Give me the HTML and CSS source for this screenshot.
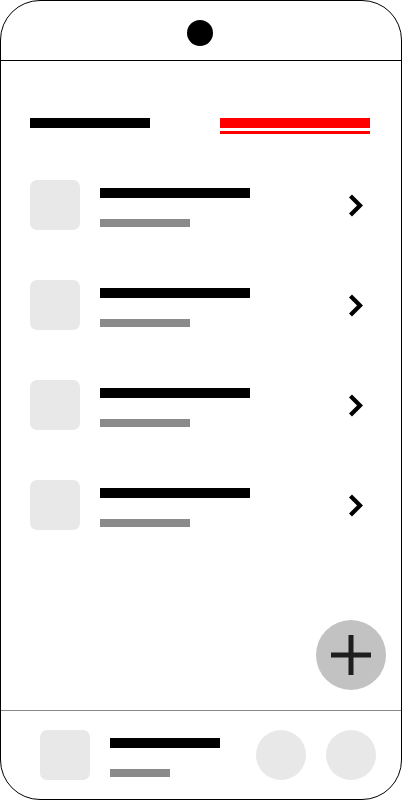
FILE: index.html
```html
<!DOCTYPE html>
<html lang="en">
<head>
<meta charset="utf-8">
<title>Wireframe</title>
<link rel="stylesheet" href="styles.css">
</head>
<body>
<div class="phone">
  <div class="notch"><div class="camera"></div></div>
  <main class="content">
    <div class="header">
      <div class="title-bar"></div>
      <div class="link">
        <div class="link-bar"></div>
        <div class="link-line"></div>
      </div>
    </div>
    <ul class="list">
      <li class="item">
        <div class="thumb"></div>
        <div class="lines"><div class="line-title"></div><div class="line-sub"></div></div>
        <svg class="chevron" viewBox="0 0 22 24" width="22" height="24"><path d="M2.5 3 L12 12.5 L2.5 22" /></svg>
      </li>
      <li class="item">
        <div class="thumb"></div>
        <div class="lines"><div class="line-title"></div><div class="line-sub"></div></div>
        <svg class="chevron" viewBox="0 0 22 24" width="22" height="24"><path d="M2.5 3 L12 12.5 L2.5 22" /></svg>
      </li>
      <li class="item">
        <div class="thumb"></div>
        <div class="lines"><div class="line-title"></div><div class="line-sub"></div></div>
        <svg class="chevron" viewBox="0 0 22 24" width="22" height="24"><path d="M2.5 3 L12 12.5 L2.5 22" /></svg>
      </li>
      <li class="item">
        <div class="thumb"></div>
        <div class="lines"><div class="line-title"></div><div class="line-sub"></div></div>
        <svg class="chevron" viewBox="0 0 22 24" width="22" height="24"><path d="M2.5 3 L12 12.5 L2.5 22" /></svg>
      </li>
    </ul>
    <button class="fab" type="button" aria-label="Add">
      <svg viewBox="0 0 70 70" width="70" height="70"><path d="M15 35 H55 M35 15 V55" /></svg>
    </button>
  </main>
  <footer class="footer">
    <div class="thumb"></div>
    <div class="lines"><div class="footer-title"></div><div class="footer-sub"></div></div>
    <div class="circles">
      <div class="circle"></div>
      <div class="circle"></div>
    </div>
  </footer>
</div>
</body>
</html>
```

FILE: styles.css
```css
* { box-sizing: border-box; }

html, body {
  margin: 0;
  padding: 0;
  background: #fff;
  font-family: "Liberation Sans", Arial, sans-serif;
}

.phone {
  width: 402px;
  height: 800px;
  border: 1px solid #000;
  border-radius: 40px;
  overflow: hidden;
  display: flex;
  flex-direction: column;
  background: #fff;
}

.notch {
  height: 60px;
  flex-shrink: 0;
  border-bottom: 1px solid #000;
  padding: 19px 0 0 186px;
}

.camera {
  width: 26px;
  height: 26px;
  border-radius: 50%;
  background: #000;
}

.content {
  flex: 1;
  display: flex;
  flex-direction: column;
  padding: 57px 0 20px 0;
}

.header {
  display: flex;
  justify-content: space-between;
  align-items: flex-start;
  padding: 0 31px 0 29px;
  margin-bottom: 46px;
}

.title-bar {
  width: 120px;
  height: 10px;
  background: #000;
}

.link {
  width: 150px;
}

.link-bar {
  height: 10px;
  background: #ff0000;
}

.link-line {
  height: 3px;
  margin-top: 3px;
  background: #ff0000;
}

.list {
  list-style: none;
  margin: 0;
  padding: 0 31px 0 29px;
  display: flex;
  flex-direction: column;
  gap: 50px;
}

.item {
  display: flex;
  align-items: flex-start;
  height: 50px;
}

.thumb {
  width: 50px;
  height: 50px;
  flex-shrink: 0;
  border-radius: 7px;
  background: #e8e8e8;
}

.lines {
  margin-left: 20px;
  padding-top: 8px;
}

.line-title {
  width: 150px;
  height: 10px;
  background: #000;
}

.line-sub {
  width: 90px;
  height: 8px;
  margin-top: 21px;
  background: #8a8a8a;
}

.chevron {
  margin-left: auto;
  margin-top: 13px;
  display: block;
}

.chevron path {
  fill: none;
  stroke: #000;
  stroke-width: 4.2;
  stroke-linejoin: miter;
  stroke-linecap: butt;
}

.fab {
  margin-top: auto;
  align-self: flex-end;
  margin-right: 15px;
  width: 70px;
  height: 70px;
  border: none;
  padding: 0;
  border-radius: 50%;
  background: #c2c2c2;
  display: block;
}

.fab svg {
  display: block;
}

.fab path {
  fill: none;
  stroke: #1e1e1e;
  stroke-width: 5;
}

.footer {
  height: 89px;
  flex-shrink: 0;
  border-top: 1px solid #888;
  display: flex;
  align-items: flex-start;
  padding: 19px 25px 0 39px;
}

.footer-title {
  width: 110px;
  height: 10px;
  background: #000;
}

.footer-sub {
  width: 60px;
  height: 8px;
  margin-top: 21px;
  background: #8a8a8a;
}

.circles {
  margin-left: auto;
  display: flex;
  gap: 20px;
}

.circle {
  width: 50px;
  height: 50px;
  border-radius: 50%;
  background: #e8e8e8;
}
```
